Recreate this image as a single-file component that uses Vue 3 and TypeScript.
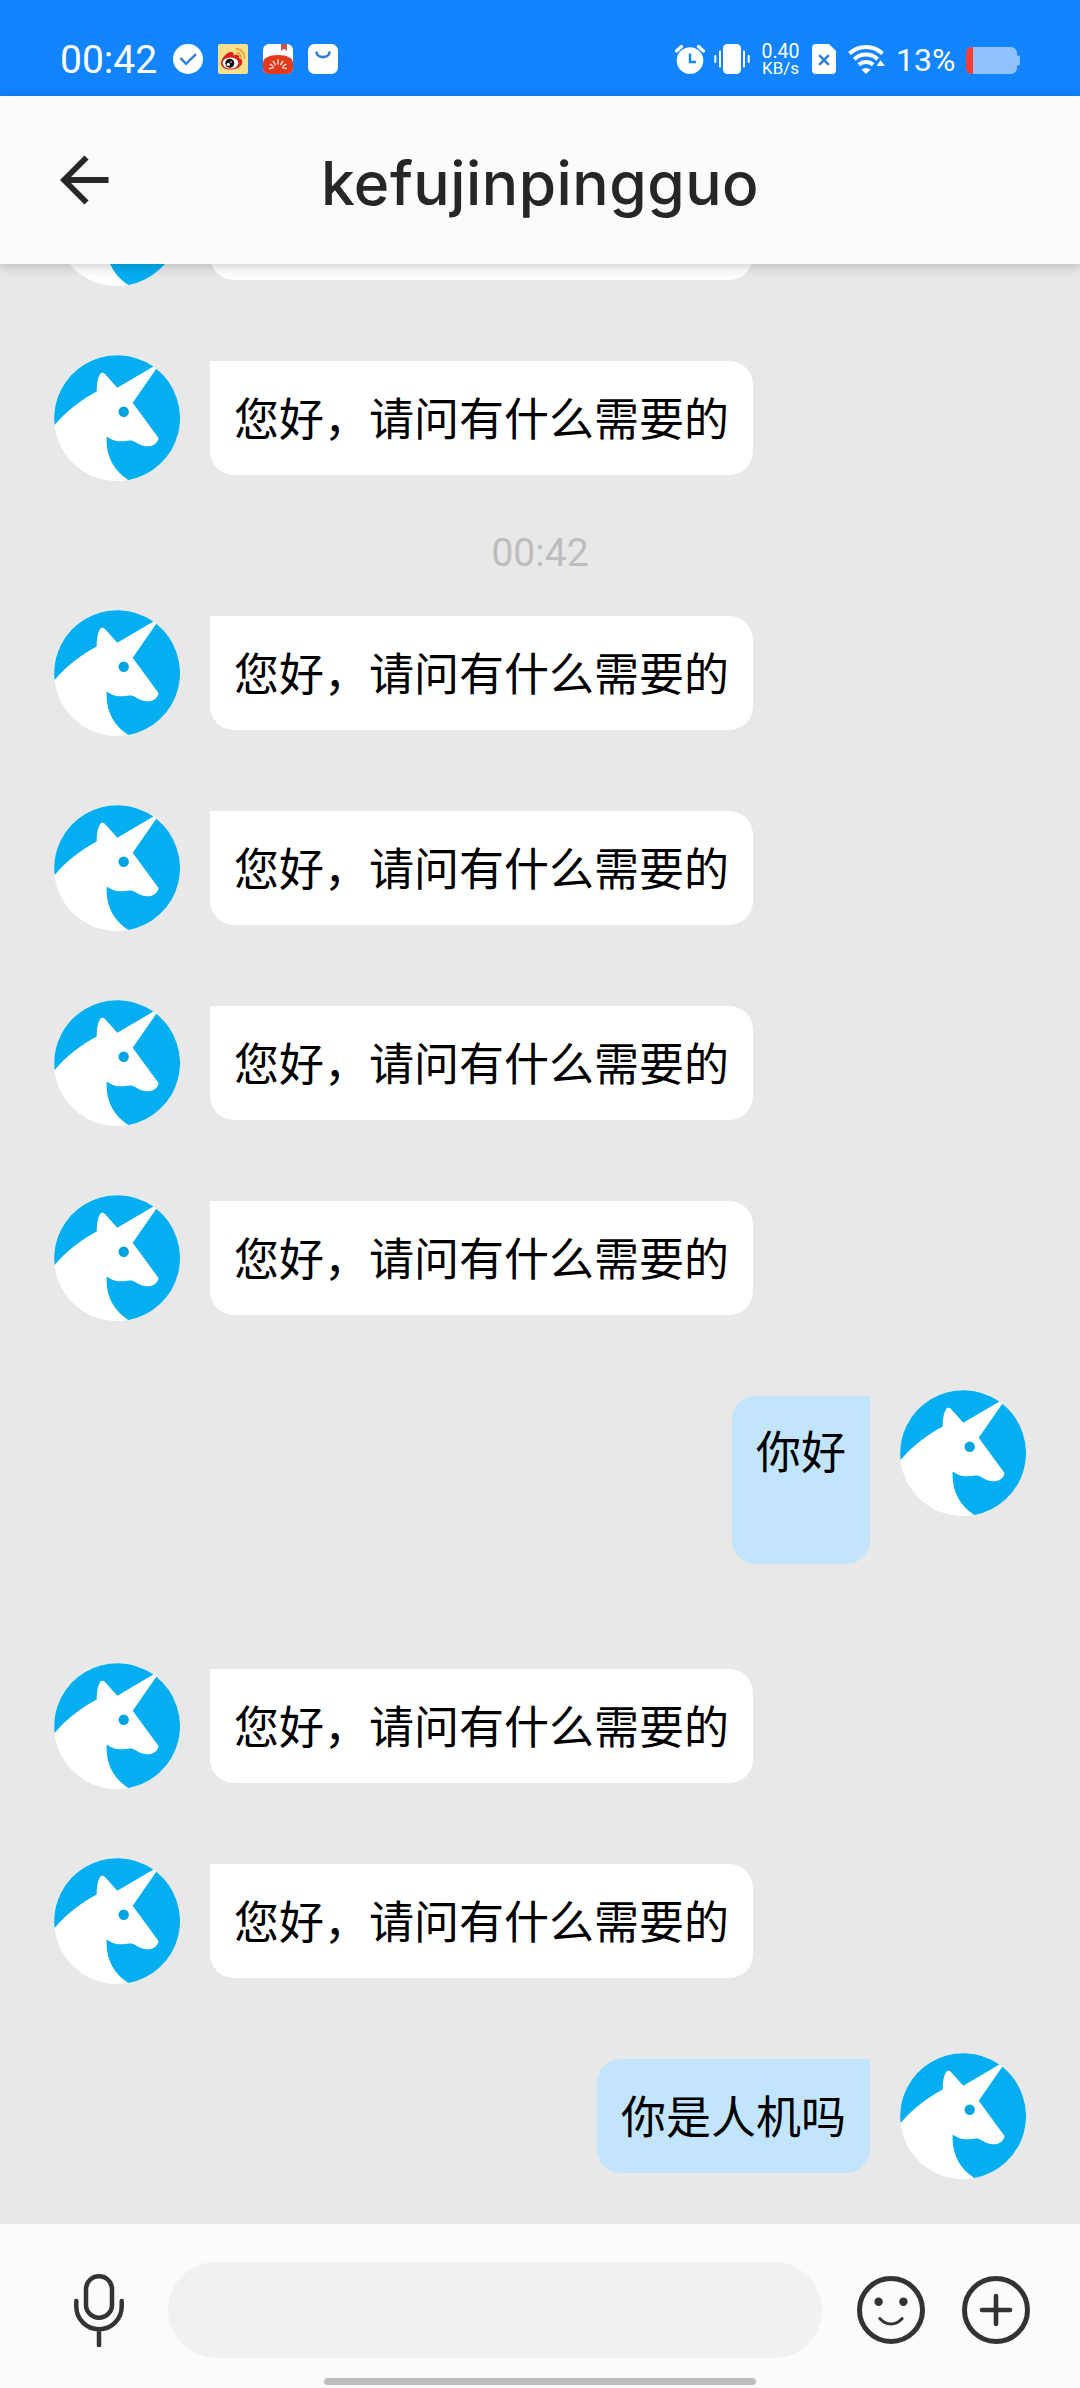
<script setup lang="ts">
interface ChatItem {
  id: number
  kind: 'in' | 'out' | 'time'
  text: string
  tall?: boolean
}

const greeting = '您好，请问有什么需要的'

// The first entry is scrolled under the header, so only its lower edge shows.
const items: ChatItem[] = [
  { id: 1, kind: 'in', text: '' },
  { id: 2, kind: 'in', text: greeting },
  { id: 3, kind: 'time', text: '00:42' },
  { id: 4, kind: 'in', text: greeting },
  { id: 5, kind: 'in', text: greeting },
  { id: 6, kind: 'in', text: greeting },
  { id: 7, kind: 'in', text: greeting },
  { id: 8, kind: 'out', text: '你好', tall: true },
  { id: 9, kind: 'in', text: greeting },
  { id: 10, kind: 'in', text: greeting },
  { id: 11, kind: 'out', text: '你是人机吗' },
]
</script>

<template>
  <div class="screen">
    <div class="status">
      <span class="clock">00:42</span>
      <div class="notices">
        <svg width="30" height="30" viewBox="0 0 30 30">
          <circle cx="15" cy="15" r="15" fill="#fff" />
          <path d="M7.500 14l5.500 5.800L23 10.200" fill="none" stroke="#2f7fd8" stroke-width="2.500" />
        </svg>
        <svg width="30" height="30" viewBox="0 0 30 30">
          <rect width="30" height="30" rx="2" fill="#fbe08c" />
          <path d="M18.500 4.800a8.600 8.600 0 0 1 8.100 9" fill="none" stroke="#efa03a" stroke-width="2" stroke-linecap="round" />
          <path d="M19.200 9a4.200 4.200 0 0 1 3.600 4.200" fill="none" stroke="#efa03a" stroke-width="1.800" stroke-linecap="round" />
          <path d="M3 19C3 14.500 9 8 13 8c2.500 0 3 1.500 2.400 3.500C18.500 10 22 10.500 21 14c2.500.8 3.200 2.200 3.200 4C24.200 22.500 18.500 25.500 12.500 25.500S3 23 3 19z" fill="#dc2018" />
          <ellipse cx="12.500" cy="19" rx="7.900" ry="5.500" fill="#fff" />
          <circle cx="11.800" cy="19.200" r="4.500" fill="#111" />
          <circle cx="10.300" cy="20.300" r="1.600" fill="#fff" />
          <circle cx="13" cy="18" r=".8" fill="#fff" />
        </svg>
        <svg width="30" height="30" viewBox="0 0 30 30">
          <rect width="30" height="30" rx="6" fill="#fff" />
          <path d="M18 0h6v7l-3-2.200L18 7z" fill="#c8564a" />
          <path d="M0 19c0-5 6-8 15-8s15 3 15 8v5a6 6 0 0 1-6 6H6a6 6 0 0 1-6-6z" fill="#e2391c" />
          <path d="M15 16v4M10.300 17.300l2 3.400M19.700 17.300l-2 3.400M6.500 24.600l4-1M23.500 24.600l-4-1M7.300 20.300l2.600 1.700M22.700 20.300l-2.600 1.700" stroke="#ffe9dc" stroke-width="1.400" stroke-linecap="round" />
        </svg>
        <svg width="30" height="30" viewBox="0 0 30 30">
          <rect width="30" height="30" rx="6.500" fill="#fff" />
          <path d="M8.500 8.500c.8 6.200 12.200 6.200 13 0" fill="none" stroke="#2f7fd8" stroke-width="2.600" stroke-linecap="round" />
        </svg>
      </div>
      <div class="system">
        <svg class="alarm" width="30" height="30" viewBox="0 0 30 30">
          <circle cx="15" cy="16.500" r="13.300" fill="#fff" />
          <path d="M1.500 7L6.500 2.500M28.500 7l-5-4.500" stroke="#fff" stroke-width="3.200" stroke-linecap="round" />
          <path d="M15 9.500v8.500h6" fill="none" stroke="#1784ff" stroke-width="2.400" />
        </svg>
        <svg class="vibrate" width="36" height="30" viewBox="0 0 36 30">
          <rect x="9" y="0" width="18" height="30" rx="4.500" fill="#fff" />
          <path d="M6 7.500v15M1.300 12v6M30 7.500v15M34.700 12v6" stroke="#fff" stroke-width="2" stroke-linecap="round" />
        </svg>
        <div class="speed"><span>0.40</span><span class="unit">KB/s</span></div>
        <svg class="sim" width="24" height="30" viewBox="0 0 24 30">
          <path d="M4 0h13l7 7v19a4 4 0 0 1-4 4H4a4 4 0 0 1-4-4V4a4 4 0 0 1 4-4z" fill="#fff" />
          <path d="M7.200 11.200l9.600 9.600M16.800 11.200l-9.600 9.600" stroke="#2f7fd8" stroke-width="2.600" />
        </svg>
        <svg class="wifi" width="37" height="30" viewBox="0 0 37 30">
          <g fill="none" stroke="#fff" stroke-width="4">
            <path d="M1.500 9.500a24 24 0 0 1 33 0" />
            <path d="M6.300 15.200a17 17 0 0 1 23.400 0" />
            <path d="M10.800 20.800a10.500 10.500 0 0 1 14.400 0" />
          </g>
          <path d="M13.500 25.600q4.500-3 9 0L18 30z" fill="#fff" />
          <path d="M28.500 22l4-5.800 4.300 5.800z" fill="#fff" />
        </svg>
        <span class="percent">13%</span>
        <svg class="battery" width="54" height="27" viewBox="0 0 54 27">
          <path d="M6 0h39a6 6 0 0 1 6 6v2.500h1a2 2 0 0 1 2 2v6a2 2 0 0 1-2 2h-1V21a6 6 0 0 1-6 6H6a6 6 0 0 1-6-6V6a6 6 0 0 1 6-6z" fill="#8fc2ff" />
          <path d="M7 0v27H6a6 6 0 0 1-6-6V6a6 6 0 0 1 6-6z" fill="#fa3c35" />
        </svg>
      </div>
    </div>

    <header class="header">
      <svg class="back" width="50" height="50" viewBox="0 0 50 50">
        <path d="M48.500 25H5M26.500 2.500L4 25l22.500 22.500" fill="none" stroke="#262626" stroke-width="5.800" />
      </svg>
      <h1>kefujinpingguo</h1>
    </header>

    <main class="chat">
      <template v-for="item in items" :key="item.id">
        <div v-if="item.kind === 'time'" class="time">{{ item.text }}</div>
        <div v-else class="row" :class="[item.kind, { tall: item.tall }]">
          <svg class="avatar" width="126" height="126" viewBox="0 0 126 126">
            <circle cx="63" cy="63" r="63" fill="#fff" />
            <path
              d="M.6 70A63 63 0 0 1 99.400 11.600L63.300 32.700 51 19c-1.500-1.700-4-1.700-5 .3-2.500 4-3.300 10-3.300 17.200C27 45 13 55.500.6 70z"
              fill="#04aef0"
            />
            <path
              d="M102.300 13.800A63 63 0 0 1 74.300 125C59 115 51.500 100 52.700 81.500c4.300 3 8.300 4.600 12.800 4.800 4.500.2 7.500-1.300 12.200-.8 5 1.500 8.500 5.600 15 5.800 6.500.2 11.300-3.300 11.800-8.300L78.700 47.700z"
              fill="#04aef0"
            />
            <circle cx="69.700" cy="56.700" r="5.200" fill="#04a4e2" />
          </svg>
          <div class="bubble">{{ item.text }}</div>
        </div>
      </template>
    </main>

    <footer class="composer">
      <svg class="mic" width="52" height="74" viewBox="0 0 52 74">
        <g fill="none" stroke="#333" stroke-width="4.500" stroke-linecap="round">
          <rect x="13" y="3.200" width="26" height="41.500" rx="13" />
          <path d="M3.300 28v5.500a22.700 22.700 0 0 0 45.400 0V28M26 57v15.500" />
        </g>
      </svg>
      <div class="field"></div>
      <svg class="smile" width="68" height="68" viewBox="0 0 68 68">
        <circle cx="34" cy="34" r="31.500" fill="none" stroke="#333" stroke-width="5" />
        <circle cx="21.600" cy="25.700" r="4.200" fill="#333" />
        <circle cx="46.400" cy="25.700" r="4.200" fill="#333" />
        <path d="M22.800 42.500c6.500 7.300 15.900 7.300 22.400 0" fill="none" stroke="#333" stroke-width="3" stroke-linecap="round" />
      </svg>
      <svg class="plus" width="68" height="68" viewBox="0 0 68 68">
        <circle cx="34" cy="34" r="31.500" fill="none" stroke="#333" stroke-width="5" />
        <path d="M34 20v28M20 34h28" stroke="#333" stroke-width="4.600" stroke-linecap="round" />
      </svg>
      <div class="home"></div>
    </footer>
  </div>
</template>

<style>
body {
  margin: 0;
}
</style>

<style scoped>
.screen {
  width: 1080px;
  height: 2388px;
  display: flex;
  flex-direction: column;
  overflow: hidden;
  background: #e8e8e8;
  font-family: Roboto, 'Noto Sans CJK SC', sans-serif;
}
svg {
  display: block;
  flex: none;
}
.status {
  height: 96px;
  flex: none;
  box-sizing: border-box;
  padding: 22px 60px 0 60px;
  display: flex;
  align-items: center;
  background: #1284ff;
  color: #fff;
}
.clock {
  width: 113px;
  padding-top: 2px;
  font-size: 39px;
  line-height: 46px;
}
.notices {
  display: flex;
  gap: 15px;
}
.system {
  margin-left: auto;
  display: flex;
  align-items: center;
}
.vibrate {
  margin-left: 9px;
}
.speed {
  width: 41px;
  margin-left: 10px;
  padding-top: 2px;
  display: flex;
  flex-direction: column;
  align-items: center;
  font-size: 19.5px;
  line-height: 17px;
}
.unit {
  font-size: 17px;
}
.sim {
  margin-left: 11px;
}
.wifi {
  margin-left: 12px;
}
.percent {
  width: 59px;
  margin-left: 11px;
  font-size: 32px;
  line-height: 38px;
  padding-top: 2px;
  white-space: nowrap;
}
.battery {
  margin-left: 11px;
  margin-top: 3px;
}
.header {
  position: relative;
  z-index: 1;
  height: 168px;
  flex: none;
  box-sizing: border-box;
  padding: 0 60px;
  display: flex;
  align-items: center;
  background: #fbfbfb;
  box-shadow: 0 2px 12px rgba(0, 0, 0, 0.22);
}
h1 {
  flex: 1;
  margin: 6px 50px 0 0;
  text-align: center;
  font-family: Inter, Roboto, sans-serif;
  font-size: 60.5px;
  font-weight: 500;
  line-height: 72px;
  letter-spacing: 0.5px;
  color: #262626;
}
.chat {
  flex: 1;
  min-height: 0;
  overflow: hidden;
  display: flex;
  flex-direction: column;
}
.row {
  flex: none;
  display: flex;
  align-items: flex-start;
  gap: 30px;
  padding: 0 54px;
  margin-top: 69px;
}
.row:first-child {
  margin-top: -104px;
}
.row:first-child .bubble {
  width: 495px;
}
.row.out {
  flex-direction: row-reverse;
}
.row.tall {
  margin-bottom: 30px;
}
.bubble {
  margin-top: 6px;
  min-height: 54px;
  padding: 29px 24px 31px;
  border-radius: 0 24px 24px 24px;
  background: #fff;
  color: #000;
  font-family: 'Noto Sans CJK SC', sans-serif;
  font-size: 45px;
  line-height: 54px;
}
.out .bubble {
  border-radius: 24px 0 24px 24px;
  background: #c3e4fd;
}
.tall .bubble {
  min-height: 108px;
  padding: 27px 24px 33px;
}
.time {
  flex: none;
  height: 48px;
  margin-top: 48px;
  text-align: center;
  font-size: 39px;
  line-height: 48px;
  color: #bdbdbd;
}
.time + .row {
  margin-top: 33px;
}
.composer {
  position: relative;
  height: 164px;
  flex: none;
  box-sizing: border-box;
  padding: 38px 50px 30px 73px;
  display: flex;
  align-items: center;
  background: #fbfbfb;
}
.field {
  width: 654px;
  height: 96px;
  margin-left: 43px;
  border-radius: 48px;
  background: #f1f1f1;
}
.smile {
  margin-left: 35px;
}
.plus {
  margin-left: 37px;
}
.home {
  position: absolute;
  left: 324px;
  bottom: 3px;
  width: 432px;
  height: 7px;
  border-radius: 4px;
  background: #bdbdbd;
}
</style>
